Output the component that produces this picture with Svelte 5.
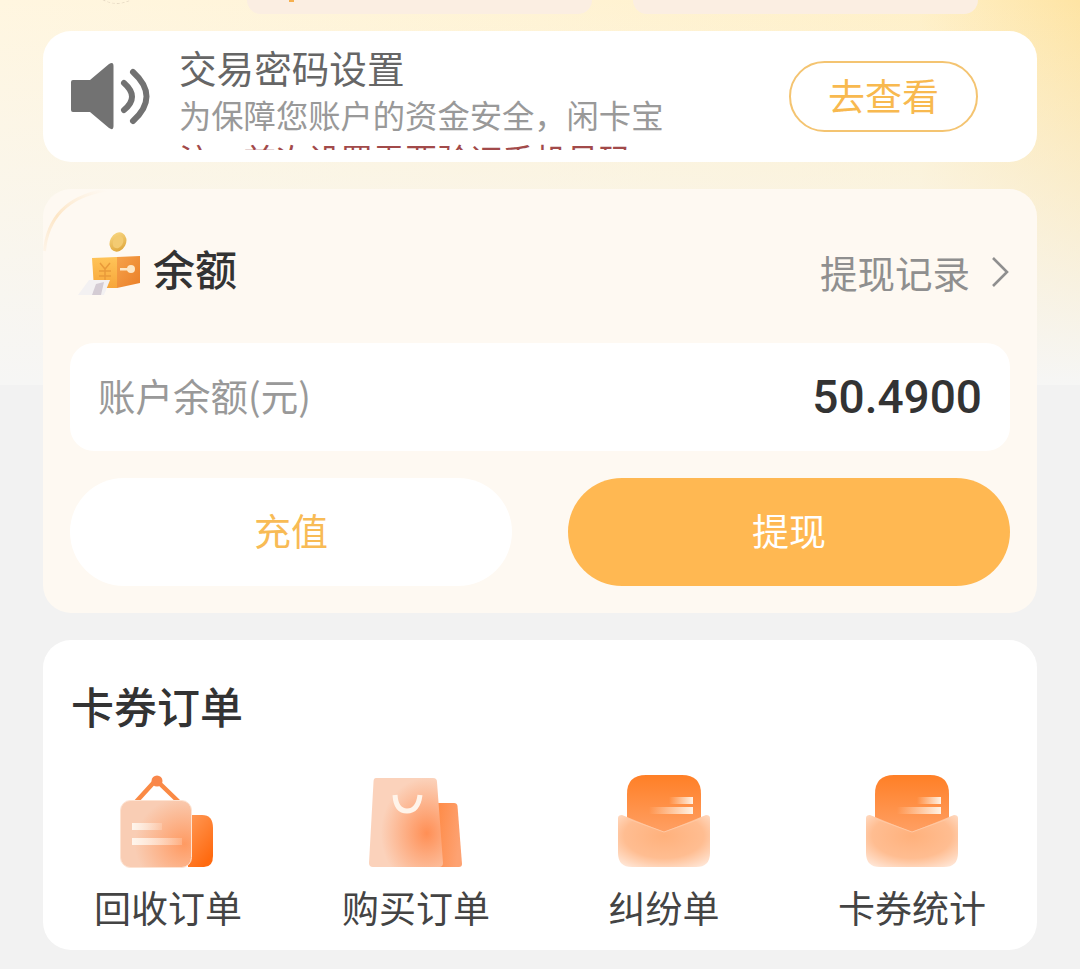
<script>
  const orders = [
    { label: '回收订单', icon: 'sign' },
    { label: '购买订单', icon: 'bag' },
    { label: '纠纷单', icon: 'mail' },
    { label: '卡券统计', icon: 'mail' }
  ];
</script>

<div class="page">
  <div class="top-row">
    <div class="avatar"></div>
    <div class="stub"><span class="dot"></span></div>
    <div class="stub"></div>
  </div>

  <section class="notice">
    <svg class="speaker" viewBox="0 0 80 70" width="80" height="70" aria-hidden="true">
      <path d="M3 18 H20 L39 2 Q43.500 -1 43.500 4 V64 Q43.500 69 39 66 L20 50 H3 Q1 50 1 48 V20 Q1 18 3 18Z" fill="#727272"/>
      <path d="M54 21 Q70 35 54 48" fill="none" stroke="#727272" stroke-width="6" stroke-linecap="round"/>
      <path d="M63 10 Q90 34.500 63 59" fill="none" stroke="#727272" stroke-width="6" stroke-linecap="round"/>
    </svg>
    <div class="notice-text">
      <div class="notice-title">交易密码设置</div>
      <div class="notice-scroll">
        <div class="notice-desc">为保障您账户的资金安全，闲卡宝</div>
        <div class="notice-warn">注：首次设置需要验证手机号码</div>
      </div>
    </div>
    <div class="go-btn">去查看</div>
  </section>

  <section class="balance">
    <svg class="arc" viewBox="0 0 110 80" width="110" height="80" aria-hidden="true">
      <defs>
        <linearGradient id="arcFade" x1="0" y1="1" x2="1" y2="0">
          <stop offset="0" stop-color="#fde9cf" stop-opacity="0.3"/>
          <stop offset="0.35" stop-color="#fde6c6"/>
          <stop offset="0.8" stop-color="#fde9cf" stop-opacity="0"/>
        </linearGradient>
      </defs>
      <path d="M1.500 62 Q6 12 60 1.500 H105" fill="none" stroke="url(#arcFade)" stroke-width="3"/>
    </svg>
    <div class="balance-head">
      <div class="balance-title">
        <svg class="safe" viewBox="0 0 70 76" width="70" height="76" aria-hidden="true">
          <defs>
            <linearGradient id="safeL" x1="0" y1="0" x2="0" y2="1">
              <stop offset="0" stop-color="#ffc458"/>
              <stop offset="1" stop-color="#f7a63a"/>
            </linearGradient>
            <linearGradient id="safeR" x1="0" y1="0" x2="1" y2="1">
              <stop offset="0" stop-color="#f6a24a"/>
              <stop offset="1" stop-color="#ea7f28"/>
            </linearGradient>
            <linearGradient id="coin" x1="0" y1="0" x2="1" y2="1">
              <stop offset="0" stop-color="#fbdc8a"/>
              <stop offset="1" stop-color="#dba032"/>
            </linearGradient>
          </defs>
          <ellipse cx="41" cy="12" rx="8" ry="10" transform="rotate(28 41 12)" fill="url(#coin)"/>
          <ellipse cx="41" cy="12" rx="5" ry="6.500" transform="rotate(28 41 12)" fill="#f3cb72"/>
          <path d="M15 28 L40 27 V58 H17Z" fill="url(#safeL)"/>
          <path d="M40 27 L63 26 V53 L40 58Z" fill="url(#safeR)"/>
          <path d="M23 33 L28 39 L33 33 M22 41 H34 M22 46 H34 M28 39 V51" fill="none" stroke="#e99a3a" stroke-width="1.500"/>
          <circle cx="54" cy="39" r="4" fill="#fde7c6"/>
          <rect x="43" y="38" width="8" height="2.500" fill="#fde7c6"/>
          <path d="M12 50 H33 L27 65 H1Z" fill="#f3f1f2"/>
          <path d="M19 54 L27 52 L24 65 H15Z" fill="#d4ccd4"/>
        </svg>
        <span>余额</span>
      </div>
      <div class="records">
        <span>提现记录</span>
        <svg viewBox="0 0 20 32" width="20" height="32" aria-hidden="true">
          <path d="M3 2 L17 16 L3 30" fill="none" stroke="#8f8f8f" stroke-width="2.600"/>
        </svg>
      </div>
    </div>
    <div class="amount-row">
      <span class="amount-label">账户余额(元)</span>
      <span class="amount">50.4900</span>
    </div>
    <div class="actions">
      <div class="action ghost">充值</div>
      <div class="action solid">提现</div>
    </div>
  </section>

  <section class="orders">
    <h2>卡券订单</h2>
    <div class="order-grid">
      {#each orders as o, i}
        <div class="order">
          {#if o.icon === 'sign'}
            <svg viewBox="0 0 100 96" width="100" height="96" aria-hidden="true">
              <defs>
                <linearGradient id="signBack" x1="0" y1="0" x2="0.6" y2="1">
                  <stop offset="0" stop-color="#ff9a58"/>
                  <stop offset="1" stop-color="#ff6a10"/>
                </linearGradient>
                <radialGradient id="signFront" cx="0.9" cy="0.65" r="0.7">
                  <stop offset="0" stop-color="#ff9a62"/>
                  <stop offset="1" stop-color="#f9cdb4"/>
                </radialGradient>
                <linearGradient id="bar" x1="0" y1="0" x2="1" y2="0">
                  <stop offset="0" stop-color="#fff5ec"/>
                  <stop offset="1" stop-color="#fff5ec" stop-opacity="0.2"/>
                </linearGradient>
              </defs>
              <path d="M17 29 L38 6 L62 29" fill="none" stroke="#fa8a45" stroke-width="4.500"/>
              <circle cx="39" cy="7" r="5.500" fill="#f9874a"/>
              <path d="M70 41 H84 Q95 41 95 54 V82 Q95 93 86 93 H70Z" fill="url(#signBack)"/>
              <rect x="2.500" y="26.500" width="71" height="67" rx="10" fill="url(#signFront)" stroke="#fde3d2" stroke-width="1"/>
              <rect x="14" y="49" width="30" height="7" fill="url(#bar)"/>
              <rect x="14" y="64" width="50" height="7" fill="url(#bar)"/>
            </svg>
          {:else if o.icon === 'bag'}
            <svg class="bag" viewBox="0 0 100 96" width="100" height="96" aria-hidden="true">
              <defs>
                <linearGradient id="bagBack" x1="0" y1="0" x2="1" y2="0.4">
                  <stop offset="0" stop-color="#ff8a45"/>
                  <stop offset="1" stop-color="#fda272"/>
                </linearGradient>
                <radialGradient id="bagFront" cx="0.78" cy="0.62" r="0.62">
                  <stop offset="0" stop-color="#ff8f55"/>
                  <stop offset="1" stop-color="#fbd2bb"/>
                </radialGradient>
              </defs>
              <path d="M70 29 H87 Q90 29 90.500 32 L95 90 Q95 93 92 93 H70Z" fill="url(#bagBack)"/>
              <path d="M9 4 Q6.500 4 6.500 8 L2 89 Q2 93 6 93 H72 Q76 93 76 89 L70 8 Q70 4 66 4Z" fill="url(#bagFront)"/>
              <path d="M28 21 Q29 37 40 37 Q51 37 53 21" fill="none" stroke="#fff4ea" stroke-width="5"/>
            </svg>
          {:else}
            <svg class="mail" viewBox="0 0 100 96" width="100" height="96" aria-hidden="true">
              <defs>
                <linearGradient id={`paper${i}`} x1="0" y1="0" x2="0" y2="1">
                  <stop offset="0" stop-color="#ff7f26"/>
                  <stop offset="1" stop-color="#ffa46c"/>
                </linearGradient>
                <radialGradient id={`env${i}`} cx="0.5" cy="0.4" r="0.72">
                  <stop offset="0" stop-color="#ffb17c"/>
                  <stop offset="0.6" stop-color="#ffbd91"/>
                  <stop offset="1" stop-color="#ffe6d6"/>
                </radialGradient>
                <linearGradient id={`line${i}`} x1="0" y1="0" x2="1" y2="0">
                  <stop offset="0" stop-color="#fff3e6" stop-opacity="0"/>
                  <stop offset="1" stop-color="#fff3e6"/>
                </linearGradient>
              </defs>
              <path d="M10 66 V20 Q10 1 29 1 H65 Q84 1 84 20 V66Z" fill={`url(#paper${i})`}/>
              <rect x="52" y="23" width="24" height="7" fill={`url(#line${i})`}/>
              <rect x="32" y="33" width="44" height="7" fill={`url(#line${i})`}/>
              <path d="M1 44 Q1 41 5 41 L47 58 L89 41 Q93 41 93 44 V79 Q93 93 79 93 H15 Q1 93 1 79Z" fill={`url(#env${i})`}/>
              <path d="M10 44.500 L47 58 L84 44.500" fill="none" stroke="#ffc9a4" stroke-width="1"/>
            </svg>
          {/if}
          <span class="order-label">{o.label}</span>
        </div>
      {/each}
    </div>
  </section>
</div>

<style>
  :global(body) {
    margin: 0;
  }
  .page {
    width: 1080px;
    height: 969px;
    overflow: hidden;
    box-sizing: border-box;
    padding: 0 43px;
    background:
      linear-gradient(to bottom, rgba(246, 246, 245, 0) 0, rgba(246, 246, 245, 0.45) 170px, rgba(246, 246, 245, 1) 384px) 0 0 / 100% 385px no-repeat,
      linear-gradient(to right, #fff6e0 0, #fff3d4 50%, #fff0c8 85%, #fee4a4 100%) 0 0 / 100% 385px no-repeat,
      #f2f2f2;
    font-family: "Noto Sans CJK SC", "Noto Sans", sans-serif;
    color: #333;
  }
  .top-row {
    height: 14px;
    position: relative;
    display: flex;
    gap: 41px;
    padding-left: 204px;
    padding-right: 60px;
    overflow: hidden;
  }
  .stub {
    flex: 0 0 345px;
    height: 14px;
    background: #fbeee2;
    border-radius: 0 0 28px 28px;
    position: relative;
  }
  .dot {
    position: absolute;
    left: 42px;
    top: 0;
    width: 5px;
    height: 2px;
    background: #f6b04f;
  }
  .avatar {
    position: absolute;
    left: 46px;
    top: -52px;
    width: 54px;
    height: 54px;
    border-radius: 50%;
    border: 1px dashed #e6d9c4;
  }
  .notice {
    margin-top: 17px;
    height: 131px;
    background: #fff;
    border-radius: 28px;
    display: flex;
    align-items: flex-start;
    padding-left: 27px;
    padding-right: 59px;
    box-sizing: border-box;
  }
  .speaker {
    flex: none;
    margin-top: 31px;
    width: 80px;
    height: 70px;
  }
  .notice-text {
    margin-left: 29px;
    width: 484px;
    flex: none;
  }
  .notice-title {
    font-size: 37.600px;
    line-height: 38px;
    margin-top: 17px;
    color: #666;
  }
  .notice-scroll {
    margin-top: 8px;
    height: 56px;
    overflow: hidden;
    font-size: 32.300px;
    white-space: nowrap;
  }
  .notice-desc {
    color: #999;
    line-height: 40px;
    height: 40px;
  }
  .notice-warn {
    color: #a24a4a;
    line-height: 48px;
    margin-top: 0;
    width: 484px;
    overflow: hidden;
  }
  .go-btn {
    margin-left: auto;
    margin-top: 30px;
    width: 189px;
    height: 71px;
    box-sizing: border-box;
    border: 2px solid #f4c471;
    border-radius: 36px;
    color: #f8b94f;
    font-size: 37px;
    padding-bottom: 4px;
    display: flex;
    align-items: center;
    justify-content: center;
  }
  .balance {
    position: relative;
    margin-top: 27px;
    height: 424px;
    box-sizing: border-box;
    border-radius: 28px;
    background: #fef9f2;
    padding: 0 27px;
    overflow: hidden;
  }
  .arc {
    position: absolute;
    left: 0;
    top: 0;
  }
  .balance-head {
    height: 154px;
    display: flex;
    justify-content: space-between;
    align-items: flex-start;
    position: relative;
  }
  .balance-title {
    display: flex;
    align-items: flex-start;
    margin-left: 7px;
    margin-top: 41px;
  }
  .balance-title span {
    font-size: 42px;
    line-height: 50px;
    margin-left: 6px;
    margin-top: 13px;
    font-weight: 500;
    color: #333;
  }
  .records {
    display: flex;
    align-items: center;
    gap: 20px;
    margin-top: 61px;
    font-size: 37.500px;
    line-height: 44px;
    color: #8f8f8f;
    margin-right: 0;
  }
  .amount-row {
    position: relative;
    height: 108px;
    background: #fff;
    border-radius: 24px;
    display: flex;
    align-items: center;
    justify-content: space-between;
    padding: 0 28px;
  }
  .amount-label {
    font-size: 37.500px;
    color: #999;
    padding-bottom: 6px;
  }
  .amount {
    font-family: Roboto, Inter, sans-serif;
    font-size: 46px;
    font-weight: 500;
    color: #333;
  }
  .actions {
    position: relative;
    margin-top: 27px;
    display: flex;
    justify-content: space-between;
  }
  .action {
    width: 442px;
    height: 108px;
    border-radius: 54px;
    display: flex;
    align-items: center;
    justify-content: center;
    font-size: 37px;
    padding-bottom: 4px;
    box-sizing: border-box;
  }
  .ghost {
    background: #fff;
    color: #f8bb55;
  }
  .solid {
    background: #ffb852;
    color: #fff;
  }
  .orders {
    margin-top: 27px;
    height: 310px;
    background: #fff;
    border-radius: 28px;
    padding: 0 0 0 28px;
    box-sizing: border-box;
  }
  h2 {
    margin: 0;
    padding-top: 40px;
    font-size: 43px;
    line-height: 50px;
    font-weight: 500;
    color: #333;
  }
  .order-grid {
    margin-top: 44px;
    margin-left: -28px;
    padding-left: 1px;
    display: grid;
    grid-template-columns: repeat(4, 248px);
  }
  .order {
    display: flex;
    flex-direction: column;
    align-items: center;
  }
  .order svg {
    display: block;
  }
  .bag {
    transform: translateX(1px);
  }
  .mail {
    transform: translateX(3px);
  }
  .order-label {
    margin-top: 15px;
    font-size: 37px;
    line-height: 44px;
    color: #444;
    white-space: nowrap;
  }
</style>
